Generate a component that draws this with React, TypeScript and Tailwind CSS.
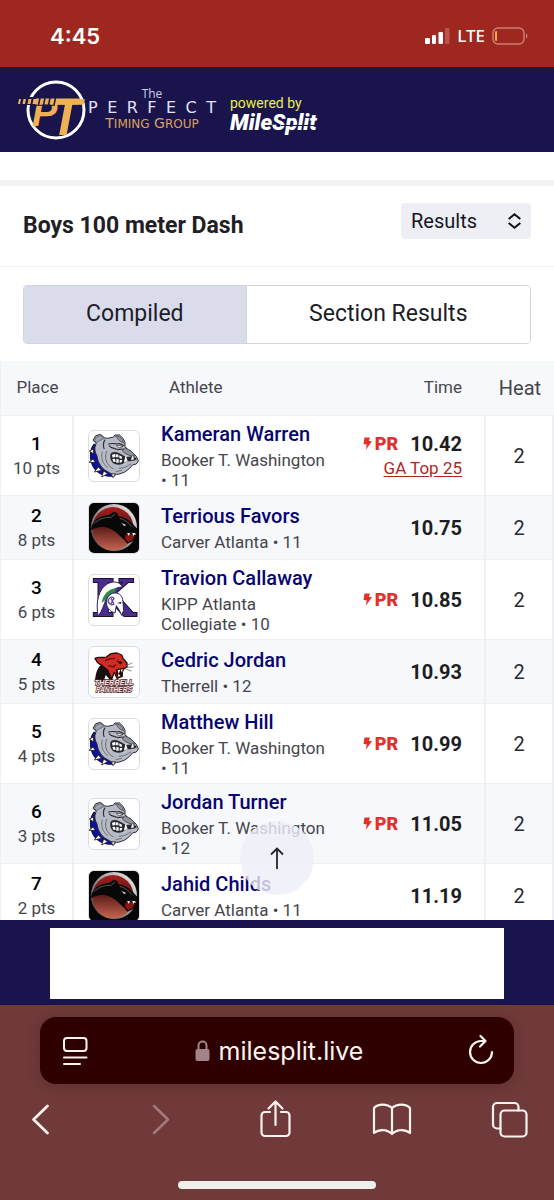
import React from "react";

type Team = "bulldog" | "carver" | "kipp" | "therrell";

interface Result {
  place: number;
  pts: number;
  name: string;
  school: string;
  grade: number;
  team: Team;
  time: string;
  pr?: boolean;
  rank?: string;
  heat: number;
}

const results: Result[] = [
  { place: 1, pts: 10, name: "Kameran Warren", school: "Booker T. Washington", grade: 11, team: "bulldog", time: "10.42", pr: true, rank: "GA Top 25", heat: 2 },
  { place: 2, pts: 8, name: "Terrious Favors", school: "Carver Atlanta", grade: 11, team: "carver", time: "10.75", heat: 2 },
  { place: 3, pts: 6, name: "Travion Callaway", school: "KIPP Atlanta Collegiate", grade: 10, team: "kipp", time: "10.85", pr: true, heat: 2 },
  { place: 4, pts: 5, name: "Cedric Jordan", school: "Therrell", grade: 12, team: "therrell", time: "10.93", heat: 2 },
  { place: 5, pts: 4, name: "Matthew Hill", school: "Booker T. Washington", grade: 11, team: "bulldog", time: "10.99", pr: true, heat: 2 },
  { place: 6, pts: 3, name: "Jordan Turner", school: "Booker T. Washington", grade: 12, team: "bulldog", time: "11.05", pr: true, heat: 2 },
  { place: 7, pts: 2, name: "Jahid Childs", school: "Carver Atlanta", grade: 11, team: "carver", time: "11.19", heat: 2 },
];

function Bulldog() {
  return (
    <svg viewBox="0 0 150 150" className="size-full" aria-hidden="true">
      <path d="M14 40 C-2 62 2 100 22 120 C40 136 64 138 78 134 L72 112 L34 74 L26 40Z" fill="#10109c" stroke="#080830" strokeWidth="3" />
      <g fill="#fff" stroke="#222" strokeWidth="2.500" strokeLinejoin="round">
        <path d="M14 54 L1 60 L13 68Z" />
        <path d="M12 84 L0 94 L19 94Z" />
        <path d="M28 108 L16 123 L38 118Z" />
        <path d="M44 120 L38 138 L56 128Z" />
        <path d="M66 126 L72 140 L80 128Z" />
      </g>
      <path d="M22 36 L12 28 L20 14 L34 10 L46 20 L56 22 L74 18 L78 12 L92 12 L102 22 L108 34 L108 46 L114 54 L128 62 L142 76 L148 90 L142 99 L130 102 L122 112 L106 124 L88 130 L66 128 L46 116 C32 104 26 90 24 74 C16 62 16 48 22 36Z" fill="#b7bac2" stroke="#2a2c35" strokeWidth="3" strokeLinejoin="round" />
      <path d="M22 18 L36 14 L44 23 L30 30 L22 34 L16 28Z" fill="#a0a4ae" stroke="#4a4e59" strokeWidth="2" />
      <path d="M80 15 L91 16 L100 26 L104 36 L90 28Z" fill="#8e939e" stroke="#3c3f49" strokeWidth="2" />
      <path d="M58 40 C68 34 78 40 92 38 L106 44 M60 44 C66 54 78 50 86 56 L104 54 M48 26 C42 36 42 46 46 54" fill="none" stroke="#2d3039" strokeWidth="3.500" />
      <path d="M82 42 L102 46 L90 51Z" fill="#fff" stroke="#222" strokeWidth="2" />
      <path d="M64 72 C66 60 82 62 94 68 L112 78 L134 76 L144 84 C136 92 120 90 108 92 C102 102 84 104 72 96 C66 90 62 82 64 72Z" fill="#26282f" />
      <g fill="#fff">
        <path d="M69 72 l8 -4 l3 9 l-9 3Z M80 69 l8 2 l1 8 l-8 0Z M91 73 l8 4 l-1 7 l-7 -3Z" />
        <path d="M70 84 l8 -1 l2 10 l-7 -1Z M82 84 l7 1 l0 10 l-7 0Z M92 87 l8 0 l-2 7 l-6 1Z" />
        <path d="M110 72 l6 19 l-11 2Z M131 69 l4 16 l-9 3Z" />
      </g>
      <path d="M108 50 L126 60 L140 74 L126 75 L110 68 L100 60Z" fill="#8f949e" stroke="#2a2c35" strokeWidth="2" />
      <path d="M54 60 C44 78 52 104 74 114 M40 62 C34 80 42 100 56 110 M90 112 C104 112 116 106 126 98 M80 122 L98 118" fill="none" stroke="#6b707c" strokeWidth="3" />
    </svg>
  );
}

function CarverPanther() {
  return (
    <svg viewBox="0 0 150 150" className="size-full" aria-hidden="true">
      <defs>
        <linearGradient id="carver-ring" x1="0" y1="1" x2="1" y2="0">
          <stop offset="0" stopColor="#3a3a3a" />
          <stop offset="0.5" stopColor="#9a9a9a" />
          <stop offset="1" stopColor="#f4f4f4" />
        </linearGradient>
        <linearGradient id="carver-disc" x1="0" y1="0" x2="0" y2="1">
          <stop offset="0" stopColor="#a51d1d" />
          <stop offset="0.45" stopColor="#5c1a18" />
          <stop offset="1" stopColor="#c4644f" />
        </linearGradient>
      </defs>
      <rect width="150" height="150" fill="#060606" />
      <ellipse cx="75" cy="74" rx="69" ry="71" fill="url(#carver-ring)" />
      <ellipse cx="72" cy="77" rx="62" ry="65" fill="url(#carver-disc)" />
      <path d="M5 82 C10 50 32 38 60 36 L74 26 L84 30 L88 40 C106 42 122 52 132 64 L148 80 L142 92 L126 88 L116 92 L122 106 L116 116 L100 106 C88 94 76 82 60 76 C42 68 20 72 5 82Z" fill="#080808" />
      <path d="M14 62 C30 47 50 42 66 43 L78 34 M92 46 C108 50 118 58 128 70" fill="none" stroke="#7d7d7d" strokeWidth="2" />
      <path d="M98 60 L112 66 L105 69Z" fill="#ddd" />
      <path d="M108 96 L124 90 L140 98 L132 112 L116 120 L106 108Z" fill="#8b1515" stroke="#140505" strokeWidth="4" />
      <path d="M114 90 l5 8 l4 -7Z M138 90 l-4 9 l-5 -8Z" fill="#fff" />
    </svg>
  );
}

function KippKnight() {
  return (
    <svg viewBox="0 0 150 150" className="size-full" aria-hidden="true">
      <text x="73" y="123" textAnchor="middle" fontFamily="DejaVu Serif" fontWeight="700" fontSize="150" fill="#4a2c8f" stroke="#17122b" strokeWidth="6" paintOrder="stroke">K</text>
      <path d="M28 124 C18 82 30 40 56 26 C76 16 94 22 100 36 C80 36 62 48 52 70 C46 86 40 106 28 124Z" fill="#fff" stroke="#33235f" strokeWidth="3" />
      <path d="M38 84 C42 58 58 42 82 40 L78 52 C62 56 54 64 48 76Z" fill="#2f8a45" />
      <path d="M52 84 C52 64 66 52 82 54 C96 56 102 68 102 84 L104 106 L98 121 L90 104 L82 92 L78 114 C66 110 54 102 52 84Z" fill="#fff" stroke="#33235f" strokeWidth="3" />
      <path d="M84 84 L97 80 L96 87Z" fill="#33235f" />
      <path d="M74 68 A11 11 0 1 0 76 86 M66 70 L74 86 M76 68 L66 86" fill="none" stroke="#6545ab" strokeWidth="4" />
    </svg>
  );
}

function TherrellPanther() {
  return (
    <svg viewBox="0 0 150 150" className="size-full" aria-hidden="true">
      <path d="M18 104 C20 70 30 54 48 46 L74 68 L68 104 L50 84 L44 104Z" fill="#171010" />
      <path d="M18 34 C30 28 44 34 52 30 L66 20 L84 18 L98 24 L102 34 L114 48 L114 60 L104 66 L98 70 L100 88 L84 94 L76 76 L68 96 L56 70 L40 56 L30 50 L24 44Z" fill="#d32b24" stroke="#240b0b" strokeWidth="4" strokeLinejoin="round" />
      <path d="M84 42 L100 46 L94 51Z M82 68 L104 64 L98 86 L84 88Z" fill="#2a0808" stroke="#2a0808" strokeWidth="3" />
      <path d="M48 42 C58 34 68 34 78 34 M58 56 L74 60 L80 52" fill="none" stroke="#5e1212" strokeWidth="4" />
      <path d="M86 69 l3 12 l5 -13Z M101 66 l-2 11 l-4 -9Z M86 89 l3 -9 l5 7Z" fill="#fff" />
      <path d="M111 56 L130 48 M112 61 L133 60 M110 66 L128 72" stroke="#555" strokeWidth="2" />
      <g fontFamily="Liberation Sans" fontWeight="700" fontStyle="italic" textAnchor="middle" fill="#ffe9e9" stroke="#4a1d22" strokeWidth="4" paintOrder="stroke">
        <text x="75" y="113" fontSize="22">THERRELL</text>
        <text x="75" y="134" fontSize="20">PANTHERS</text>
      </g>
    </svg>
  );
}

function TeamLogo({ team }: { team: Team }) {
  return (
    <div className="size-[52px] overflow-hidden rounded-md border border-[#dcdce2] bg-white">
      {team === "bulldog" && <Bulldog />}
      {team === "carver" && <CarverPanther />}
      {team === "kipp" && <KippKnight />}
      {team === "therrell" && <TherrellPanther />}
    </div>
  );
}

function StatusBar() {
  return (
    <div className="flex h-[67px] shrink-0 items-center justify-between bg-[#9e2820] pt-1 pr-[26px] pl-[50px] text-white">
      <span className="font-['Inter'] text-[22px] leading-7 font-semibold">4:45</span>
      <div className="flex items-center gap-[7px]">
        <svg width="25" height="16" viewBox="0 0 25 16" aria-hidden="true">
          <rect x="0" y="10" width="5" height="6" rx="1.3" fill="#fff" />
          <rect x="7" y="7" width="4" height="9" rx="1.3" fill="#fff" />
          <rect x="13.500" y="4" width="4.500" height="12" rx="1.300" fill="#fff" />
          <rect x="20" y="0" width="4.500" height="16" rx="1.300" fill="#b9534c" />
        </svg>
        <span className="font-['Noto_Sans'] text-[17px] leading-6 font-medium">LTE</span>
        <svg width="36" height="18" viewBox="0 0 36 18" aria-hidden="true">
          <rect x="1" y="1" width="31" height="16" rx="5" fill="none" stroke="#cc7c77" strokeWidth="1.500" />
          <rect x="3" y="4" width="2" height="10" rx="1" fill="#f5a840" />
          <path d="M34 6.500 C36 7.500 36 10.500 34 11.500Z" fill="#cc7c77" />
        </svg>
      </div>
    </div>
  );
}

function SiteHeader() {
  return (
    <header className="flex h-[85px] shrink-0 items-center bg-[#19154c] pl-[18px]">
      <a href="#home" className="flex items-center gap-[2px]" aria-label="The Perfect Timing Group">
        <svg width="68" height="62" viewBox="0 0 68 62" aria-hidden="true">
          <circle cx="38" cy="31" r="28" fill="none" stroke="#fff" strokeWidth="3" />
          <path d="M7 18h9v8H7z" fill="#19154c" />
          <g fontFamily="Liberation Sans" fontWeight="700" fontStyle="italic" fill="#f0b054">
            <text x="14" y="47" fontSize="38">P</text>
            <text x="32" y="56" fontSize="51">T</text>
          </g>
          <path d="M18 19.500h44l-2 6H17z" fill="#f0b054" />
          <path d="M1 20h2l-1 5H0z M5.500 20h2.500l-1 5H4.500z M10.500 20h3l-1 5h-3z M15.500 20h4v5h-5z" fill="#f0b054" />
          <path d="M22 19l-1.500 7M27 19l-1.500 7M32 19l-1.500 7M37.500 19l-1.500 7" stroke="#19154c" strokeWidth="1.500" />
          <path d="M17 26.300h20" stroke="#19154c" strokeWidth="1" />
        </svg>
        <span className="flex w-32 flex-col items-center">
          <span className="font-['Open_Sans'] text-[12px] leading-[13px] text-[#cfcde4]">The</span>
          <span className="flex justify-between self-stretch font-['DejaVu_Sans'] text-[16px] leading-4 text-[#e3e0fa]">
            {"PERFECT".split("").map((letter, i) => (
              <span key={i}>{letter}</span>
            ))}
          </span>
          <span className="font-['DejaVu_Sans'] text-[14px] leading-[15px] whitespace-nowrap text-[#dea05a]">
            T<span className="text-[12px]">IMING</span> G<span className="text-[12px]">ROUP</span>
          </span>
        </span>
      </a>
      <a href="#milesplit" className="relative ml-[14px] flex flex-col pt-2">
        <span className="text-[14px] leading-[18px] text-[#e8ef4d]">powered by</span>
        <span className="text-[22px] leading-[22px] font-black text-white italic">MileSplit</span>
        <span className="absolute right-0 bottom-2 h-px w-9 bg-[#19154c]" />
      </a>
    </header>
  );
}

function Bolt() {
  return (
    <svg width="9" height="13" viewBox="0 0 9 13" aria-hidden="true">
      <path d="M1.500 0.500h5.500L5.800 4 9 4.200 2.800 12.800 3.800 7.500 0.500 7Z" fill="#e0312f" />
    </svg>
  );
}

function ResultRow({ r }: { r: Result }) {
  return (
    <tr className="odd:bg-white even:bg-[#f7f8fb] [&>td]:border-b [&>td]:border-[#eff0f3]">
      <td className="border-r-2 p-0 text-center">
        <div className="text-[19px] leading-6 font-medium text-black">{r.place}</div>
        <div className="text-[17px] leading-6 text-[#45464c]">{r.pts} pts</div>
      </td>
      <td className="pt-1.5 pb-[5px] pl-3.5">
        <TeamLogo team={r.team} />
      </td>
      <td className="pt-1.5 pr-5 pb-[5px]">
        <a href="#athlete" className="mb-1 block text-[20px] leading-6 font-medium whitespace-nowrap text-[#060572]">{r.name}</a>
        <div className="text-[17px] leading-5 text-[#45464c]">
          {r.school} <span className="whitespace-nowrap">• {r.grade}</span>
        </div>
      </td>
      <td className="border-r-2 pr-[22px] text-right">
        <div className="flex items-center justify-end text-[20px] leading-6 font-bold text-[#1d1e24]">
          {r.pr && (
            <span className="mr-3 flex items-center gap-[3px] text-[18px] font-black text-[#e0312f]">
              <Bolt />
              PR
            </span>
          )}
          {r.time}
        </div>
        {r.rank && (
          <a href="#rank" className="block text-[17px] leading-6 text-[#b3261e] underline underline-offset-2">{r.rank}</a>
        )}
      </td>
      <td className="border-r-2 text-center text-[20px] text-[#2b2c32]">{r.heat}</td>
    </tr>
  );
}

function BrowserBar() {
  return (
    <footer className="flex h-[195px] shrink-0 flex-col items-center bg-[#6f3a39] pt-3 pb-[11px] font-['Inter'] text-[#fff4f0]">
      <div className="mx-10 flex h-[67px] items-center justify-between self-stretch rounded-2xl bg-[#2e0000] px-[19px] shadow-[0_2px_14px_rgba(45,0,0,0.2)]">
        <button aria-label="Page menu">
          <svg width="32" height="32" viewBox="0 0 32 32" fill="none" stroke="currentColor" strokeWidth="2" strokeLinecap="round">
            <rect x="5" y="3" width="22.500" height="13" rx="3" />
            <path d="M5 22.500h22.500M5 29h16" />
          </svg>
        </button>
        <button className="flex items-center gap-[9px] text-[25px] leading-8">
          <svg width="15" height="21" viewBox="0 0 15 21" aria-hidden="true">
            <path d="M3.500 10V5.500a4 4 0 0 1 8 0V10" fill="none" stroke="#a38387" strokeWidth="2" />
            <rect x="0.500" y="9" width="14" height="12" rx="2" fill="#a38387" />
          </svg>
          milesplit.live
        </button>
        <button aria-label="Reload">
          <svg width="28" height="32" viewBox="0 0 28 32" fill="none" stroke="currentColor" strokeWidth="2.200" strokeLinecap="round" strokeLinejoin="round">
            <path d="M25 17a11 11 0 1 1-11-11h4" />
            <path d="M13.500 1l5 5-5.500 5.500" />
          </svg>
        </button>
      </div>
      <nav className="flex items-center justify-between self-stretch pt-[15px] pr-[25px] pl-[21px]">
        <button aria-label="Back">
          <svg width="40" height="40" viewBox="0 0 40 40" fill="none" stroke="currentColor" strokeWidth="2.700" strokeLinecap="round" strokeLinejoin="round"><path d="M26.500 7L12.500 20.500 26.500 34" /></svg>
        </button>
        <button aria-label="Forward" disabled>
          <svg width="40" height="40" viewBox="0 0 40 40" fill="none" stroke="#a37a78" strokeWidth="2.500" strokeLinecap="round" strokeLinejoin="round"><path d="M16 7l14 13.500L16 34" /></svg>
        </button>
        <button aria-label="Share">
          <svg width="40" height="40" viewBox="0 0 40 40" fill="none" stroke="currentColor" strokeWidth="2.200" strokeLinecap="round" strokeLinejoin="round">
            <path d="M15 13H10a3.500 3.500 0 0 0-3.500 3.500v17A3.500 3.500 0 0 0 10 37h21a3.500 3.500 0 0 0 3.500-3.500v-17A3.500 3.500 0 0 0 31 13h-5" />
            <path d="M20.500 26V2.500M13.500 9.500l7-7 7 7" />
          </svg>
        </button>
        <button aria-label="Bookmarks">
          <svg width="40" height="40" viewBox="0 0 40 40" fill="none" stroke="currentColor" strokeWidth="2.200" strokeLinecap="round" strokeLinejoin="round">
            <path d="M20 9C15 4.500 6 4.500 2 9v25c5-4 13-4 18 1 5-5 13-5 18-1V9C34 4.500 25 4.500 20 9ZM20 9v26" />
          </svg>
        </button>
        <button aria-label="Tabs">
          <svg width="40" height="40" viewBox="0 0 40 40" fill="none" stroke="currentColor" strokeWidth="2.200" strokeLinecap="round" strokeLinejoin="round">
            <rect x="11.500" y="11.500" width="26" height="26" rx="4" />
            <path d="M11.500 29.500H8A4 4 0 0 1 4 25.500V8a4 4 0 0 1 4-4h17.500a4 4 0 0 1 4 4v3.500" />
          </svg>
        </button>
      </nav>
      <div className="mt-auto h-2 w-[198px] rounded-full bg-[#efefed]" />
    </footer>
  );
}

export default function App() {
  return (
    <div className="flex h-screen flex-col overflow-hidden bg-white font-['Roboto',sans-serif]">
      <StatusBar />
      <SiteHeader />
      <main className="relative min-h-0 flex-1 overflow-hidden">
        <div className="mt-7 h-1.5 bg-[#f2f2f3]" />
        <div className="flex h-[81px] items-start justify-between border-b border-[#efeff1] pt-[17px] pr-[23px] pl-[23px]">
          <h1 className="pt-[9px] text-[23px] leading-7 font-bold text-[#1f2026]">Boys 100 meter Dash</h1>
          <div className="relative">
            <select aria-label="View" className="h-9 w-[130px] appearance-none rounded bg-[#eeeff5] pl-2.5 text-[20px] leading-6 text-[#16161f]">
              <option>Results</option>
            </select>
            <svg className="pointer-events-none absolute top-2.5 right-2.5" width="13" height="16" viewBox="0 0 13 16" fill="none" stroke="#111" strokeWidth="2" aria-hidden="true">
              <path d="M0.700 6L6.500 1.300 12.300 6M0.700 10L6.500 14.700 12.300 10" />
            </svg>
          </div>
        </div>
        <div className="px-[23px] pt-[18px] pb-[17px]">
          <div className="flex h-[59px] overflow-hidden rounded border border-[#d2d4df] text-[23px] text-[#1c1d27]">
            <button className="w-[44%] border-r border-[#d2d4df] bg-[#dadceb]">Compiled</button>
            <button className="flex-1 bg-white">Section Results</button>
          </div>
        </div>
        <table className="w-full table-fixed border-separate border-spacing-0 border-l border-[#eff0f3]">
          <colgroup>
            <col className="w-[73px]" />
            <col className="w-[87px]" />
            <col />
            <col className="w-[136px]" />
            <col className="w-[68px]" />
          </colgroup>
          <thead>
            <tr className="h-[55px] bg-[#f7f8fb] text-[17px] text-[#45464c] [&>th]:border-b [&>th]:border-[#eff0f3] [&>th]:font-normal">
              <th className="p-0 text-center">Place</th>
              <th className="p-0"><span className="sr-only">Team</span></th>
              <th className="pl-2 text-left">Athlete</th>
              <th className="pr-6 text-right">Time</th>
              <th className="p-0 text-center text-[20px]">Heat</th>
            </tr>
          </thead>
          <tbody className="[&_td]:border-[#eff0f3]">
            {results.map((r) => (
              <ResultRow key={r.place} r={r} />
            ))}
          </tbody>
        </table>
        <button aria-label="Back to top" className="absolute bottom-[25px] left-1/2 flex size-[74px] -translate-x-1/2 items-center justify-center rounded-full bg-[#eeeff7]/80">
          <svg width="14" height="22" viewBox="0 0 14 22" fill="none" stroke="#24252c" strokeWidth="1.800" aria-hidden="true">
            <path d="M7 22V1.500M1 7.500l6-6 6 6" />
          </svg>
        </button>
      </main>
      <div className="shrink-0 bg-[#19154c] px-[50px] pt-2 pb-1.5">
        <div className="h-[71px] bg-white" />
      </div>
      <BrowserBar />
    </div>
  );
}
